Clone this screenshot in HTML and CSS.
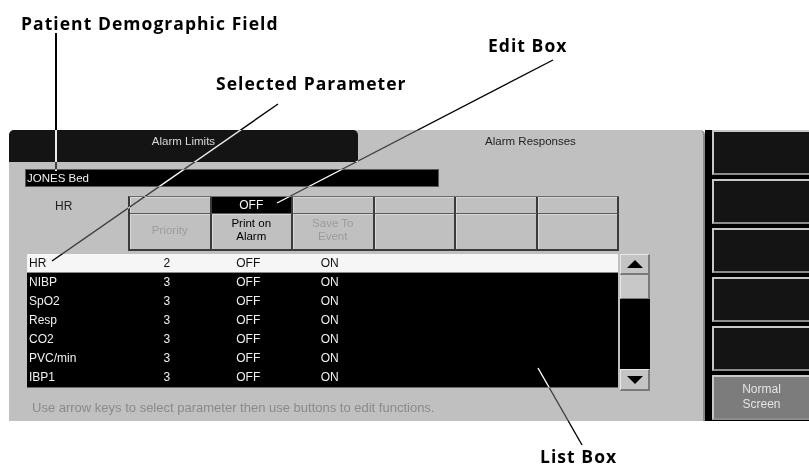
FILE: index.html
```html
<!DOCTYPE html>
<html>
<head>
<meta charset="utf-8">
<title>Alarm Responses</title>
<link rel="stylesheet" href="styles.css">
</head>
<body>
<div class="page">
  <div class="screen">
    <div class="main">
      <div class="tabs">
        <div class="tab tab-back">Alarm Limits</div>
        <div class="tab tab-front">Alarm Responses</div>
      </div>
      <div class="content">
        <div class="patient">JONES Bed</div>
        <div class="header">
          <div class="param">HR</div>
          <div class="cells">
            <div class="cell"></div>
            <div class="cell cell-edit">OFF</div>
            <div class="cell"></div>
            <div class="cell"></div>
            <div class="cell"></div>
            <div class="cell"></div>
            <div class="cell cell-name dim">Priority</div>
            <div class="cell cell-name cell-sel">Print on<br>Alarm</div>
            <div class="cell cell-name dim">Save To<br>Event</div>
            <div class="cell cell-name"></div>
            <div class="cell cell-name"></div>
            <div class="cell cell-name"></div>
          </div>
        </div>
        <div class="listarea">
          <div class="list">
            <div class="row row-sel"><span class="c-name">HR</span><span>2</span><span>OFF</span><span>ON</span></div>
            <div class="row"><span class="c-name">NIBP</span><span>3</span><span>OFF</span><span>ON</span></div>
            <div class="row"><span class="c-name">SpO2</span><span>3</span><span>OFF</span><span>ON</span></div>
            <div class="row"><span class="c-name">Resp</span><span>3</span><span>OFF</span><span>ON</span></div>
            <div class="row"><span class="c-name">CO2</span><span>3</span><span>OFF</span><span>ON</span></div>
            <div class="row"><span class="c-name">PVC/min</span><span>3</span><span>OFF</span><span>ON</span></div>
            <div class="row"><span class="c-name">IBP1</span><span>3</span><span>OFF</span><span>ON</span></div>
          </div>
          <div class="scroll">
            <div class="sbtn"><span class="tri-up"></span></div>
            <div class="thumb"></div>
            <div class="track"></div>
            <div class="sbtn sbtn-down"><span class="tri-down"></span></div>
          </div>
        </div>
        <div class="help">Use arrow keys to select parameter then use buttons to edit functions.</div>
      </div>
    </div>
    <div class="gap"></div>
    <div class="buttons">
      <div class="key"></div>
      <div class="key"></div>
      <div class="key"></div>
      <div class="key"></div>
      <div class="key"></div>
      <div class="key key-normal">Normal<br>Screen</div>
    </div>
  </div>

  <div class="callout callout-patient">Patient Demographic Field</div>
  <div class="callout callout-edit">Edit Box</div>
  <div class="callout callout-selected">Selected Parameter</div>
  <div class="callout callout-list">List Box</div>
  <svg class="leaders" width="809" height="468" viewBox="0 0 809 468">
    <line x1="56" y1="33" x2="56" y2="171" stroke="#fff" stroke-width="2"/>
    <line x1="278" y1="104" x2="52" y2="261" stroke="#fff" stroke-width="1.4"/>
    <line x1="553" y1="60" x2="277" y2="203" stroke="#fff" stroke-width="1.4"/>
    <line x1="538" y1="368" x2="582" y2="445" stroke="#fff" stroke-width="1.4"/>
  </svg>
</div>
</body>
</html>
```

FILE: styles.css
```css
* { box-sizing: border-box; }
html, body { margin: 0; padding: 0; background: #fff; }
body { font-family: "Liberation Sans", Arial, sans-serif; }

.page {
  position: relative;
  width: 809px;
  height: 468px;
  padding: 130px 0 0 9px;
  overflow: hidden;
}

.screen {
  display: flex;
  height: 291px;
}

.main {
  width: 696px;
  background: #c0c0c0;
  border-radius: 5px 5px 0 0;
  border-right: 2px solid #8a8a8a;
  display: flex;
  flex-direction: column;
}

.gap { width: 7px; background: #000; }

.tabs { display: flex; height: 32px; }
.tab {
  font-size: 11.5px;
  text-align: center;
  padding-top: 5px;
}
.tab-back {
  width: 349px;
  background: #141414;
  color: #d8d8d8;
  border-radius: 5px 5px 0 0;
}
.tab-front {
  flex: 1;
  color: #222;
}

.content { padding: 8px 0 0 17px; }

.patient {
  width: 412px;
  height: 16px;
  background: #000;
  color: #f0f0f0;
  font-size: 11.5px;
  line-height: 16px;
  padding-left: 1px;
  box-shadow: 0 0 0 1px #5a5a5a;
}

.header { display: flex; margin-top: 10px; }
.param {
  width: 102px;
  font-size: 12px;
  color: #222;
  padding: 3px 0 0 29px;
}
.cells {
  display: grid;
  grid-template-columns: repeat(6, 81.5px);
  grid-template-rows: 17px 37px;
  border-top: 1px solid #6a6a6a;
  border-left: 2px solid #3a3a3a;
}
.cell {
  border-right: 2px solid #3a3a3a;
  border-bottom: 1px solid #5a5a5a;
  box-shadow: inset 1px 1px 0 #d8d8d8;
  font-size: 12px;
  text-align: center;
  line-height: 16px;
  color: #111;
}
.cell-edit {
  background: #000;
  color: #f4f4f4;
  box-shadow: none;
}
.cell-name {
  display: flex;
  align-items: center;
  justify-content: center;
  font-size: 11.5px;
  line-height: 13px;
  padding-bottom: 3px;
  border-bottom: 2px solid #3a3a3a;
}
.cell-sel { color: #000; }
.dim { color: #9c9c9c; }

.listarea { display: flex; margin-top: 3px; margin-left: 1px; }
.list {
  width: 591px;
  height: 134px;
  background: #000;
  border-bottom: 1px solid #6a6a6a;
}
.row {
  display: grid;
  grid-template-columns: 99px 81.5px 81.5px 81.5px;
  height: 19px;
  line-height: 19px;
  font-size: 12px;
  color: #f0f0f0;
}
.row span { text-align: center; }
.row .c-name { text-align: left; padding-left: 2px; }
.row-sel { background: #f6f6f6; color: #111; border-bottom: 1px solid #8a8a8a; line-height: 18px; }

.scroll {
  width: 30px;
  margin-left: 2px;
  height: 137px;
  display: flex;
  flex-direction: column;
}
.sbtn {
  height: 21px;
  background: #c4c4c4;
  border-top: 1px solid #e8e8e8;
  border-left: 1px solid #e8e8e8;
  border-right: 2px solid #7a7a7a;
  border-bottom: 2px solid #7a7a7a;
  display: flex;
  align-items: center;
  justify-content: center;
}
.sbtn-down { height: 22px; }
.tri-up, .tri-down {
  width: 0; height: 0;
  border-left: 8px solid transparent;
  border-right: 8px solid transparent;
}
.tri-up { border-bottom: 8px solid #000; }
.tri-down { border-top: 8px solid #000; }
.thumb {
  height: 24px;
  background: #c8c8c8;
  border-left: 1px solid #e8e8e8;
  border-right: 2px solid #7a7a7a;
  border-bottom: 1px solid #7a7a7a;
}
.track { height: 70px; background: #000; }

.help {
  margin-top: 9px;
  padding-left: 6px;
  font-size: 13px;
  color: #8a8a8a;
}

.buttons {
  width: 97px;
  background: #000;
  display: flex;
  flex-direction: column;
  gap: 4px;
}
.key {
  height: 45px;
  background: #141414;
  border-top: 2px solid #c8c8c8;
  border-left: 2px solid #c8c8c8;
  border-bottom: 2px solid #8c8c8c;
}
.key-normal {
  background: #7c7c7c;
  color: #e4e4e4;
  font-size: 12px;
  line-height: 15px;
  text-align: center;
  padding-top: 5px;
}

.callout {
  position: absolute;
  font-family: "Open Sans", "DejaVu Sans", sans-serif;
  font-weight: 700;
  font-size: 17.5px;
  letter-spacing: 1.05px;
  color: #000;
  white-space: nowrap;
  line-height: 17px;
}
.callout-patient { left: 21px; top: 15px; }
.callout-edit { left: 488px; top: 37px; }
.callout-selected { left: 216px; top: 75px; }
.callout-list { left: 540px; top: 448px; }

.leaders {
  position: absolute;
  left: 0;
  top: 0;
  mix-blend-mode: difference;
  pointer-events: none;
}
```
